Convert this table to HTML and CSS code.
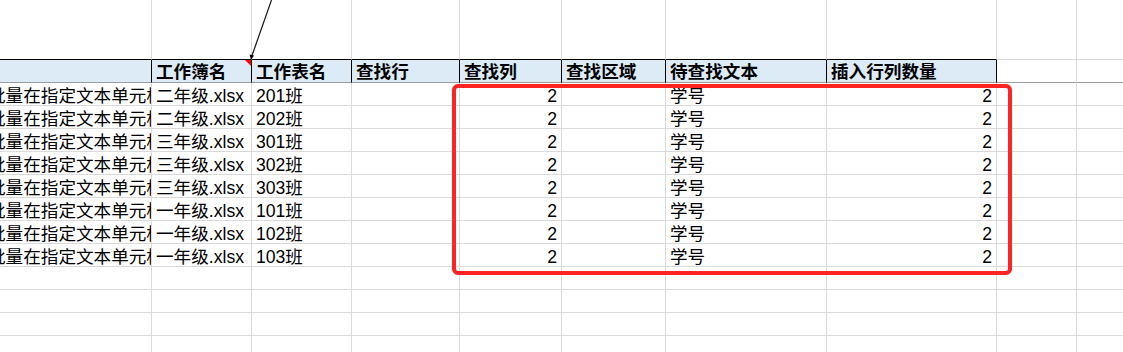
FILE: index.html
```html
<!DOCTYPE html>
<html lang="zh">
<head>
<meta charset="utf-8">
<title>Sheet</title>
<link rel="stylesheet" href="styles.css">
</head>
<body>
<div class="page">
  <div class="sheet">
    <!-- top spacer row -->
    <div class="c t"></div><div class="c t"></div><div class="c t"></div><div class="c t"></div>
    <div class="c t"></div><div class="c t"></div><div class="c t"></div><div class="c t"></div>
    <div class="c t2"></div><div class="c t2 last"></div>

    <!-- header row -->
    <div class="c h"></div>
    <div class="c h note">工作簿名<span class="tri"></span></div>
    <div class="c h">工作表名</div>
    <div class="c h">查找行</div>
    <div class="c h">查找列</div>
    <div class="c h">查找区域</div>
    <div class="c h">待查找文本</div>
    <div class="c h">插入行列数量</div>
    <div class="c hx"></div><div class="c hx last"></div>

    <div class="c clip"><span class="over">批量在指定文本单元格</span></div><div class="c">二年级.xlsx</div><div class="c">201班</div><div class="c"></div><div class="c r">2</div><div class="c"></div><div class="c">学号</div><div class="c r">2</div><div class="c"></div><div class="c last"></div>
    <div class="c clip"><span class="over">批量在指定文本单元格</span></div><div class="c">二年级.xlsx</div><div class="c">202班</div><div class="c"></div><div class="c r">2</div><div class="c"></div><div class="c">学号</div><div class="c r">2</div><div class="c"></div><div class="c last"></div>
    <div class="c clip"><span class="over">批量在指定文本单元格</span></div><div class="c">三年级.xlsx</div><div class="c">301班</div><div class="c"></div><div class="c r">2</div><div class="c"></div><div class="c">学号</div><div class="c r">2</div><div class="c"></div><div class="c last"></div>
    <div class="c clip"><span class="over">批量在指定文本单元格</span></div><div class="c">三年级.xlsx</div><div class="c">302班</div><div class="c"></div><div class="c r">2</div><div class="c"></div><div class="c">学号</div><div class="c r">2</div><div class="c"></div><div class="c last"></div>
    <div class="c clip"><span class="over">批量在指定文本单元格</span></div><div class="c">三年级.xlsx</div><div class="c">303班</div><div class="c"></div><div class="c r">2</div><div class="c"></div><div class="c">学号</div><div class="c r">2</div><div class="c"></div><div class="c last"></div>
    <div class="c clip"><span class="over">批量在指定文本单元格</span></div><div class="c">一年级.xlsx</div><div class="c">101班</div><div class="c"></div><div class="c r">2</div><div class="c"></div><div class="c">学号</div><div class="c r">2</div><div class="c"></div><div class="c last"></div>
    <div class="c clip"><span class="over">批量在指定文本单元格</span></div><div class="c">一年级.xlsx</div><div class="c">102班</div><div class="c"></div><div class="c r">2</div><div class="c"></div><div class="c">学号</div><div class="c r">2</div><div class="c"></div><div class="c last"></div>
    <div class="c clip"><span class="over">批量在指定文本单元格</span></div><div class="c">一年级.xlsx</div><div class="c">103班</div><div class="c"></div><div class="c r">2</div><div class="c"></div><div class="c">学号</div><div class="c r">2</div><div class="c"></div><div class="c last"></div>

    <div class="c"></div><div class="c"></div><div class="c"></div><div class="c"></div><div class="c"></div><div class="c"></div><div class="c"></div><div class="c"></div><div class="c"></div><div class="c last"></div>
    <div class="c"></div><div class="c"></div><div class="c"></div><div class="c"></div><div class="c"></div><div class="c"></div><div class="c"></div><div class="c"></div><div class="c"></div><div class="c last"></div>
    <div class="c"></div><div class="c"></div><div class="c"></div><div class="c"></div><div class="c"></div><div class="c"></div><div class="c"></div><div class="c"></div><div class="c"></div><div class="c last"></div>
    <div class="c"></div><div class="c"></div><div class="c"></div><div class="c"></div><div class="c"></div><div class="c"></div><div class="c"></div><div class="c"></div><div class="c"></div><div class="c last"></div>
  </div>

  <div class="highlight"></div>

  <svg class="arrow" width="40" height="62" viewBox="0 0 40 62">
    <line x1="21.5" y1="0" x2="1.5" y2="57" stroke="#1a1a1a" stroke-width="1.2"/>
    <polygon points="1,60 -0.5,54.5 4,55.5" fill="#000"/>
  </svg>
</div>
</body>
</html>
```

FILE: styles.css
```css
html, body {
  margin: 0;
  padding: 0;
  background: #fff;
}

.page {
  position: relative;
  width: 1123px;
  height: 352px;
  overflow: hidden;
  font-family: "Liberation Sans", "Noto Sans CJK SC", sans-serif;
  font-size: 17.6px;
  color: #000;
}

.sheet {
  display: grid;
  grid-template-columns: 152px 100px 100px 108px 102px 104px 161px 170px 80px 1fr;
  grid-template-rows: 60px repeat(13, 23px);
}

.c {
  box-sizing: border-box;
  border-right: 1px solid #dadada;
  border-bottom: 1px solid #dadada;
  padding: 0 4px;
  white-space: nowrap;
  overflow: hidden;
  display: flex;
  align-items: flex-end;
  line-height: 17px;
}

.c.last {
  border-right: none;
}

.c.r {
  justify-content: flex-end;
}

.t {
  border-bottom-color: #000;
}

.h {
  background: #ddebf7;
  font-weight: bold;
  border-right-color: #000;
  border-bottom-color: #9c9c9c;
  line-height: 19px;
}

.hx {
  border-bottom-color: #9c9c9c;
}

.note {
  position: relative;
}

.tri {
  position: absolute;
  top: 0;
  right: 0;
  width: 0;
  height: 0;
  border-top: 6px solid #ff0000;
  border-left: 6px solid transparent;
}

.clip {
  padding: 0;
}

.over {
  margin-left: -12px;
}

.highlight {
  position: absolute;
  left: 452px;
  top: 84px;
  width: 560px;
  height: 191px;
  box-sizing: border-box;
  border: 4px solid #ff2424;
  border-radius: 6px;
}

.arrow {
  position: absolute;
  left: 250px;
  top: 0;
  overflow: visible;
}
```
